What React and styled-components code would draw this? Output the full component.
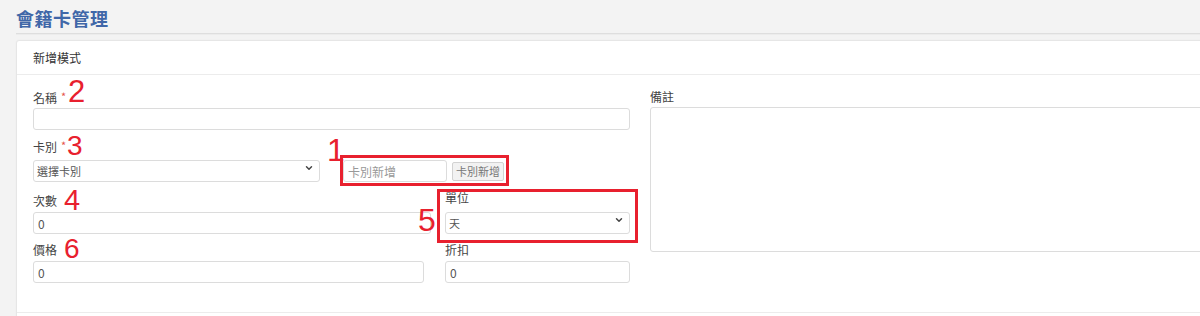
import React from "react";
import styled, { createGlobalStyle } from "styled-components";
import { ChevronDown } from "lucide-react";

const GlobalStyle = createGlobalStyle`
  html, body {
    margin: 0;
    padding: 0;
    background: #f3f3f3;
    overflow: hidden;
  }
  body {
    font-family: "Noto Sans CJK TC", "Noto Sans", sans-serif;
    color: #444;
  }
  * { box-sizing: border-box; }
`;

const Page = styled.div`
  width: 1280px;
  padding: 0 16px;
`;

const TitleBar = styled.div`
  height: 34px;
  padding-top: 7px;
  border-bottom: 1px solid #dedede;
  box-shadow: 0 1px 0 #ececec;
`;

const Title = styled.h1`
  margin: 0;
  font-size: 18px;
  line-height: 22px;
  font-weight: 600;
  color: #4067a8;
  letter-spacing: 0.5px;
`;

const Card = styled.div`
  margin-top: 6px;
  background: #fff;
  border: 1px solid #e6e6e6;
  border-radius: 3px;
  box-shadow: 0 0 2px rgba(0, 0, 0, 0.04);
`;

const CardHeader = styled.div`
  height: 34px;
  padding-left: 16px;
  display: flex;
  align-items: center;
  font-size: 12px;
  color: #333;
  border-bottom: 1px solid #ececec;
`;

const CardBody = styled.div`
  display: flex;
  gap: 20px;
  padding: 13px 17px 29px 16px;
`;

const CardFooter = styled.div`
  height: 20px;
  border-top: 1px solid #ececec;
`;

const LeftCol = styled.div`
  width: 597px;
  display: flex;
  flex-direction: column;
  gap: 7px;
`;

const RightCol = styled.div`
  flex: 1;
  display: flex;
  flex-direction: column;
`;

const Row = styled.div`
  display: flex;
  align-items: flex-end;
  gap: ${(p) => p.$gap || 0}px;
`;

const Group = styled.div`
  position: relative;
  width: ${(p) => (p.$w ? `${p.$w}px` : "100%")};
  display: flex;
  flex-direction: column;
`;

const Label = styled.label`
  height: 17px;
  line-height: 17px;
  margin-bottom: ${(p) => p.$mb ?? 3}px;
  font-size: 12px;
  color: #444;
`;

const Star = styled.span`
  color: #e5534b;
  font-size: 11px;
  margin-left: 4px;
  vertical-align: 2px;
`;

const Input = styled.input`
  width: ${(p) => (p.$w ? `${p.$w}px` : "100%")};
  height: 22px;
  padding: 0 4px;
  border: 1px solid #dcdcdc;
  border-radius: 3px;
  font-family: inherit;
  font-size: 12px;
  color: #555;
  background: #fff;
  outline: none;
  &::placeholder {
    color: #999;
  }
`;

const SelectWrap = styled.div`
  position: relative;
  width: 100%;
`;

const Select = styled.select`
  width: 100%;
  height: 22px;
  padding: 0 20px 0 3px;
  border: 1px solid #dcdcdc;
  border-radius: 3px;
  font-family: inherit;
  font-size: 11px;
  color: #555;
  background: #fff;
  appearance: none;
  outline: none;
`;

const Chevron = styled(ChevronDown)`
  position: absolute;
  right: 6px;
  top: 6px;
  pointer-events: none;
  color: #444;
`;

const InlineAdd = styled.div`
  position: relative;
  display: flex;
  align-items: center;
  gap: 5px;
  margin-left: 23px;
`;

const SmallButton = styled.button`
  height: 19px;
  width: 52px;
  padding: 0;
  border: 1px solid #d2d2d2;
  border-radius: 2px;
  background: #f2f2f2;
  font-family: inherit;
  font-size: 11px;
  color: #777;
`;

const Highlight = styled.span`
  position: absolute;
  top: ${(p) => p.$t}px;
  right: ${(p) => p.$r}px;
  bottom: ${(p) => p.$b}px;
  left: ${(p) => p.$l}px;
  border: 3px solid #e8202e;
  pointer-events: none;
`;

const Marker = styled.span`
  position: absolute;
  left: ${(p) => p.$x}px;
  top: ${(p) => p.$y}px;
  font-family: "Liberation Sans", Arial, sans-serif;
  font-size: ${(p) => p.$size || 31}px;
  line-height: 1;
  color: #e8202e;
  pointer-events: none;
`;

const TextArea = styled.textarea`
  width: 100%;
  height: 145px;
  border: 1px solid #dcdcdc;
  border-radius: 3px;
  resize: none;
  font-family: inherit;
  outline: none;
`;

function SelectBox({ value, options }) {
  return (
    <SelectWrap>
      <Select defaultValue={value}>
        {options.map((o) => (
          <option key={o}>{o}</option>
        ))}
      </Select>
      <Chevron size={10} strokeWidth={3.5} />
    </SelectWrap>
  );
}

export default function App() {
  return (
    <Page>
      <GlobalStyle />
      <TitleBar>
        <Title>會籍卡管理</Title>
      </TitleBar>
      <Card>
        <CardHeader>新增模式</CardHeader>
        <CardBody>
          <LeftCol>
            <Group>
              <Label>
                名稱<Star>*</Star>
              </Label>
              <Input />
              <Marker $x={35} $y={-12}>2</Marker>
            </Group>

            <Row>
              <Group $w={287}>
                <Label>
                  卡別<Star>*</Star>
                </Label>
                <SelectBox value="選擇卡別" options={["選擇卡別"]} />
                <Marker $x={34} $y={-5} $size={28}>3</Marker>
              </Group>
              <InlineAdd>
                <Input $w={104} placeholder="卡別新增" />
                <SmallButton>卡別新增</SmallButton>
                <Highlight $t={-5} $r={-5} $b={-4} $l={-3} />
                <Marker $x={-16} $y={-26} $size={32}>1</Marker>
              </InlineAdd>
            </Row>

            <Row $gap={14}>
              <Group $w={398}>
                <Label>次數</Label>
                <Input defaultValue="0" />
                <Marker $x={31} $y={-6} $size={29}>4</Marker>
              </Group>
              <Group $w={185}>
                <Label>單位</Label>
                <SelectBox value="天" options={["天", "月", "年"]} />
                <Highlight $t={0} $r={-8} $b={-9} $l={-8} />
                <Marker $x={-27} $y={15} $size={32}>5</Marker>
              </Group>
            </Row>

            <Row $gap={21}>
              <Group $w={391}>
                <Label>價格</Label>
                <Input defaultValue="0" />
                <Marker $x={31} $y={-6} $size={28}>6</Marker>
              </Group>
              <Group $w={185}>
                <Label>折扣</Label>
                <Input defaultValue="0" />
              </Group>
            </Row>
          </LeftCol>

          <RightCol>
            <Label $mb={2}>備註</Label>
            <TextArea />
          </RightCol>
        </CardBody>
        <CardFooter />
      </Card>
    </Page>
  );
}
